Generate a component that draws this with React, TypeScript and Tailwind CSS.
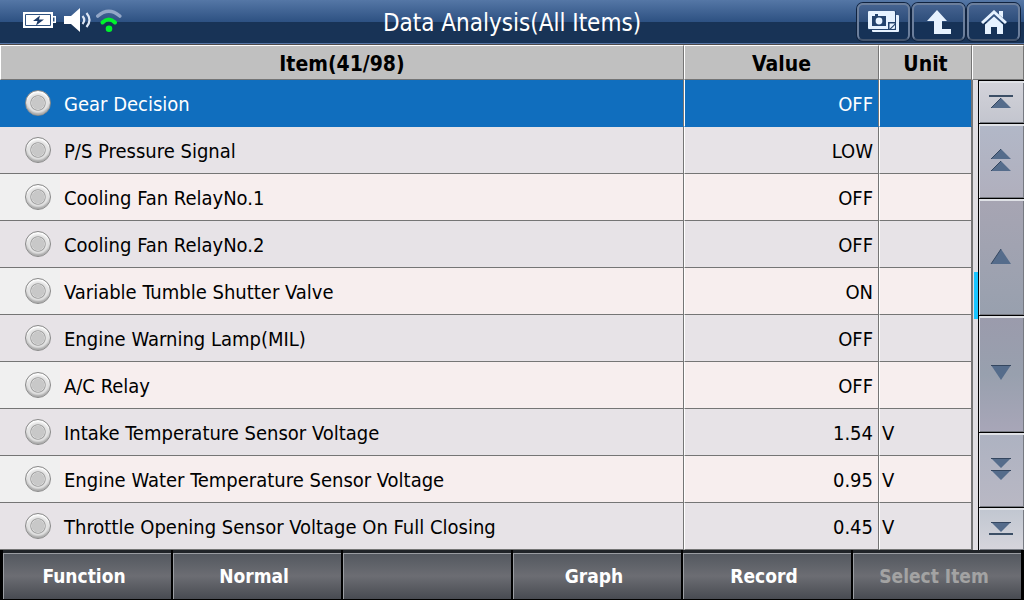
import { useState } from "react"
import clsx from "clsx"

type Item = { name: string; value: string; unit?: string }

const items: Item[] = [
  { name: "Gear Decision", value: "OFF" },
  { name: "P/S Pressure Signal", value: "LOW" },
  { name: "Cooling Fan RelayNo.1", value: "OFF" },
  { name: "Cooling Fan RelayNo.2", value: "OFF" },
  { name: "Variable Tumble Shutter Valve", value: "ON" },
  { name: "Engine Warning Lamp(MIL)", value: "OFF" },
  { name: "A/C Relay", value: "OFF" },
  { name: "Intake Temperature Sensor Voltage", value: "1.54", unit: "V" },
  { name: "Engine Water Temperature Sensor Voltage", value: "0.95", unit: "V" },
  { name: "Throttle Opening Sensor Voltage On Full Closing", value: "0.45", unit: "V" },
]

const actions = [
  { label: "Function" },
  { label: "Normal" },
  { label: "" },
  { label: "Graph" },
  { label: "Record" },
  { label: "Select Item", disabled: true },
]

function StatusIcons() {
  return (
    <div className="flex items-start pt-2 pl-[23px]">
      <svg width="33" height="24" viewBox="0 0 33 24" aria-label="Battery charging">
        <path d="M0 4h30v4h3v7h-3v5H0z" fill="#fff" />
        <path d="M2.500 6.500h25v11h-25z" fill="none" stroke="#2f5280" />
        <path d="M30 9.500h1.500v4H30z" fill="#2f5280" />
        <path d="M17 7.500l-7 5.500h4.500l-1.500 4.500 8-6h-5z" fill="#1c3a66" />
      </svg>
      <svg className="ml-2" width="28" height="24" viewBox="0 0 28 24" aria-label="Sound on">
        <path d="M0 8h7L16 0v24L7 16H0z" fill="#fff" />
        <path d="M18.500 8q3.500 4 0 8M22.500 5q6 7 0 14" fill="none" stroke="#dde6f4" strokeWidth="2.200" />
      </svg>
      <svg className="ml-1" width="26" height="24" viewBox="0 0 26 24" aria-label="Wireless">
        <path d="M1.800 8q11-9.500 22 0" fill="none" stroke="#93a7c7" strokeWidth="3.600" strokeLinecap="round" />
        <path d="M6.500 14.500q6.200-6 12.500 0" fill="none" stroke="#00f32c" strokeWidth="4" strokeLinecap="round" />
        <circle cx="13" cy="20.700" r="3.300" fill="#00f32c" />
      </svg>
    </div>
  )
}

const toolButton =
  "grid h-[38px] w-[53px] place-items-center rounded-md border-2 border-[#6c7f9c] border-b-[#43546d] bg-linear-to-b from-[#456390] via-[#2d4d7a] via-50% to-[#163257] to-50% shadow-[0_0_0_1px_#10233f]"

function Toolbar() {
  return (
    <div className="flex justify-end gap-[2px] pt-[3px] pr-1">
      <button type="button" aria-label="Screenshot" className={toolButton}>
        <svg width="32" height="22" viewBox="0 0 32 22">
          <path d="M4 4h26q1 0 1 1v15q0 1-1 1H5q-1 0-1-1z" fill="#e6f2ff" />
          <path d="M0 0h28v19H0z" fill="#24436d" />
          <path d="M1 0h25q1 0 1 1v16q0 1-1 1H1q-1 0-1-1V1q0-1 1-1z" fill="#e6f2ff" />
          <path d="M4 5h3V3h3v2h8v10H4z" fill="#24436d" />
          <circle cx="11" cy="10" r="3.400" fill="#e6f2ff" />
          <path d="M20 19v-8h8v2l-6 6z" fill="#24436d" />
          <path d="M21.500 18v-5.500H27z" fill="#e6f2ff" />
        </svg>
      </button>
      <button type="button" aria-label="Back" className={toolButton}>
        <svg width="26" height="26" viewBox="0 0 26 26">
          <path d="M11 1l10 11h-5v8h9v5H8V12H1z" fill="#e6f2ff" />
        </svg>
      </button>
      <button type="button" aria-label="Home" className={toolButton}>
        <svg width="26" height="24" viewBox="0 0 26 24">
          <path d="M1 13L13 2l12 11" fill="none" stroke="#e6f2ff" strokeWidth="3" />
          <path d="M18 1h4v7l-4-3.500z" fill="#e6f2ff" />
          <path d="M4 14.500l9-8 9 8V24h-6v-7h-6v7H4z" fill="#e6f2ff" />
        </svg>
      </button>
    </div>
  )
}

type ScrollKind = "first" | "pageUp" | "up" | "down" | "pageDown" | "last"

const scrollButtons: { kind: ScrollKind; label: string; style: string }[] = [
  { kind: "first", label: "First row", style: "h-[43px] from-[#d3d3da] to-[#c3c5ce]" },
  { kind: "pageUp", label: "Page up", style: "h-[75px] from-[#b2b8c8] to-[#b0afbd]" },
  { kind: "up", label: "Row up", style: "h-[117px] from-[#a7a5b3] to-[#98a0ae]" },
  { kind: "down", label: "Row down", style: "h-[117px] from-[#9b9bac] via-[#98a0ae] to-[#a8a6b8]" },
  { kind: "pageDown", label: "Page down", style: "h-[75px] from-[#adb2c1] to-[#b9b8c4]" },
  { kind: "last", label: "Last row", style: "h-[43px] from-[#c0c6d0] to-[#d6d5dc]" },
]

// fill = arrow heads, edge = their dark top or left rims, bar = the stop line
const scrollArt: Record<ScrollKind, { fill: string; edge: string; bar?: string }> = {
  first: { fill: "M12 8l10 10H2z", edge: "M2 18L12 8", bar: "M0 6h24" },
  pageUp: { fill: "M12 0l10 10H2zM12 12l10 10H2z", edge: "M2 10L12 0M2 22L12 12" },
  up: { fill: "M12 4l10 15H2z", edge: "M2 19L12 4" },
  down: { fill: "M12 18L2 3h20z", edge: "M2 3.500h20" },
  pageDown: { fill: "M12 10L2 0h20zM12 22L2 12h20z", edge: "M2 .5h20M2 12.500h20" },
  last: { fill: "M12 15L2 5h20z", edge: "M2 5.500h20", bar: "M0 17h24" },
}

function ScrollIcon({ kind }: { kind: ScrollKind }) {
  const art = scrollArt[kind]
  return (
    <svg width="24" height="24" viewBox="0 0 24 24">
      <path d={art.fill} fill="#556c8b" />
      <path d={art.edge} stroke="#34465f" />
      {art.bar && <path d={art.bar} stroke="#3c4f66" strokeWidth="2" />}
    </svg>
  )
}

const headCell = "border border-white border-r-[#757575] border-b-[#757575] px-0 pt-[3px] pb-0"

export default function App() {
  const [current, setCurrent] = useState(0)

  return (
    <div className="bg-black font-['DejaVu_Sans_Condensed','DejaVu_Sans',sans-serif] text-black">
      <header className="grid h-[45px] grid-cols-[1fr_auto_1fr] border-b border-[#504a48] bg-linear-to-b from-[#5577a6] via-[#2d5182] via-50% to-[#183356] to-50% shadow-[inset_0_-1px_0_#5878a8]">
        <StatusIcons />
        <h1 className="text-2xl leading-[46px] text-white">Data Analysis(All Items)</h1>
        <Toolbar />
      </header>

      <main className="flex">
        <table className="flex-1 table-fixed border-separate border-spacing-0">
          <colgroup>
            <col />
            <col className="w-[195px]" />
            <col className="w-[93px]" />
          </colgroup>
          <thead>
            <tr className="h-[35px] bg-[#c0c0c0] text-[21px] leading-[30px]">
              <th className={headCell}>Item(41/98)</th>
              <th className={headCell}>Value</th>
              <th className={headCell}>Unit</th>
            </tr>
          </thead>
          <tbody>
            {items.map((item, i) => {
              const active = i === current
              const odd = i % 2 === 1
              const line = active ? "border-b-[#106ebe]" : "border-b-[#757575]"
              return (
                <tr
                  key={item.name}
                  onClick={() => setCurrent(i)}
                  className={clsx(
                    "h-[47px] text-xl leading-[44px]",
                    active ? "bg-[#106ebe] text-white" : odd ? "bg-[#e7e3e7]" : "bg-[#f7eeee]"
                  )}
                >
                  <td className={clsx("border-r border-b border-r-[#757575] p-0", line)}>
                    <label className="flex">
                      <span className={clsx("grid h-[46px] w-[60px] place-items-center pl-4", !active && !odd && "bg-[#f0f0f0]")}>
                        <input
                          type="checkbox"
                          className="size-[26px] appearance-none rounded-full border border-[#8a8a8a] bg-[radial-gradient(circle_closest-side,#c8c8c8_50%,#dcdcdc_53%,#9c9c9c_60%,#e4e4e4_68%)] shadow-[inset_0_2px_2px_#ffffff,inset_0_-2px_2px_#a8a8a8]"
                        />
                      </span>
                      <span className="pt-[2px] pl-1">{item.name}</span>
                    </label>
                  </td>
                  <td className={clsx("border-x border-b border-l-white border-r-[#757575] pt-[2px] pr-[5px] pb-0 pl-0 text-right", line)}>
                    {item.value}
                  </td>
                  <td className={clsx("border-x border-b border-l-white border-r-[#757575] pt-[2px] pr-0 pb-0 pl-[2px]", line)}>
                    {item.unit}
                  </td>
                </tr>
              )
            })}
          </tbody>
        </table>

        <aside className="w-[52px]">
          <div className="h-[35px] border border-white border-r-[#757575] border-b-[#757575] bg-[#c0c0c0]" />
          <div className="flex border-l border-[#757575] bg-[#e0dee2]">
            <div className="w-[5px] pt-48 pl-px">
              <div className="h-[47px] bg-[#18c5ff]" />
            </div>
            <div className="flex-1">
              {scrollButtons.map((b) => (
                <button
                  key={b.kind}
                  type="button"
                  aria-label={b.label}
                  className={clsx(
                    "grid w-full place-items-center border-t border-l border-black bg-linear-to-b pr-[2px] shadow-[inset_1px_2px_0_#dfe1e6,inset_-1px_-1px_0_#777a82]",
                    b.style
                  )}
                >
                  <ScrollIcon kind={b.kind} />
                </button>
              ))}
            </div>
          </div>
        </aside>
      </main>

      <footer className="grid h-[50px] grid-cols-6 gap-[2px] bg-black px-[3px] pb-px">
        {actions.map((a, i) => (
          <button
            key={i}
            type="button"
            disabled={a.disabled}
            aria-label={a.label || "Unassigned"}
            className="border-t-[3px] border-[#202428] bg-linear-to-b from-[#53585f] via-[#6c6d73] to-[#484b52] pr-[6px] text-[19px] leading-[44px] font-bold text-white shadow-[inset_1px_1px_0_#9a9da2] disabled:text-[#a3a3a3]"
          >
            {a.label}
          </button>
        ))}
      </footer>
    </div>
  )
}
